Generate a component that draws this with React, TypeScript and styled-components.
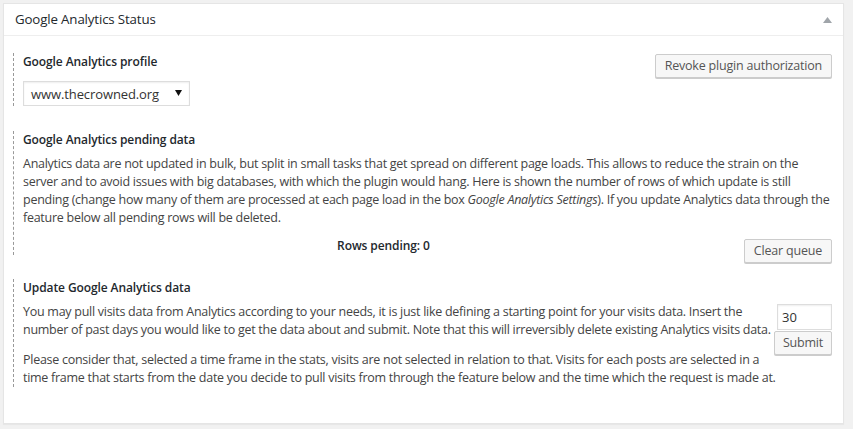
import React from 'react';
import styled, { createGlobalStyle } from 'styled-components';

const GlobalStyle = createGlobalStyle`
  html, body {
    margin: 0;
    padding: 0;
    background: #f1f1f1;
  }
  body {
    font-family: "Open Sans", "Liberation Sans", sans-serif;
    font-size: 12.5px;
    letter-spacing: -0.27px;
    color: #444;
  }
`;

const Page = styled.div`
  width: 853px;
  height: 429px;
  padding: 3px 9px 0 3px;
  box-sizing: border-box;
`;

const Postbox = styled.div`
  width: 841px;
  height: 421px;
  box-sizing: border-box;
  background: #fff;
  border: 1px solid #e5e5e5;
  box-shadow: 0 1px 1px rgba(0, 0, 0, 0.04);
  overflow: hidden;
`;

const Header = styled.div`
  height: 32px;
  box-sizing: border-box;
  padding: 6px 11px 0 11px;
  border-bottom: 1px solid #eee;
  display: flex;
  justify-content: space-between;
  align-items: flex-start;
`;

const Title = styled.h2`
  margin: 0;
  font-size: 13.3px;
  letter-spacing: -0.15px;
  line-height: 19.6px;
  font-weight: 400;
  color: #23282d;
`;

const Toggle = styled.svg`
  margin-top: 7px;
  width: 9px;
  height: 6px;
  fill: #a0a5aa;
`;

const Body = styled.div`
  padding: 17px 11px 12px 9px;
`;

const Section = styled.div<{ $flex?: boolean; $gap?: number }>`
  border-left: 1px dashed #999;
  padding-left: 9px;
  margin-bottom: ${p => p.$gap ?? 25}px;
  line-height: 18px;
  ${p => p.$flex && `
    display: flex;
    justify-content: space-between;
    align-items: flex-start;
  `}
`;

const Heading = styled.h4`
  margin: 0;
  font-size: 12px;
  letter-spacing: -0.1px;
  line-height: 18px;
  font-weight: 600;
  color: #23282d;
`;

const Text = styled.p<{ $gap?: number }>`
  margin: ${p => p.$gap ?? 6}px 0 0 0;
  line-height: 18px;
`;

const Centered = styled.p`
  margin: 10px 0 0 0;
  text-align: center;
  font-weight: 600;
  font-size: 12px;
  letter-spacing: -0.1px;
  color: #23282d;
`;

const SelectBox = styled.div`
  margin-top: 10px;
  width: 167px;
  height: 25px;
  box-sizing: border-box;
  border: 1px solid #ddd;
  box-shadow: inset 0 1px 2px rgba(0, 0, 0, 0.07);
  display: flex;
  align-items: center;
  justify-content: space-between;
  padding: 0 7px 0 7px;
  color: #333;
  font-size: 13px;
  letter-spacing: -0.1px;
`;

const Arrow = styled.svg`
  width: 7px;
  height: 6px;
  fill: #111;
  margin-bottom: 2px;
`;

const Button = styled.button<{ $float?: boolean; $top?: number }>`
  font-family: "Open Sans", "Liberation Sans", sans-serif;
  font-size: 12.5px;
  letter-spacing: -0.2px;
  color: #555;
  background: #f7f7f7;
  border: 1px solid #ccc;
  border-radius: 2px;
  box-shadow: 0 1px 0 #ccc;
  height: 24px;
  line-height: 21px;
  padding: 0 9px 1px;
  cursor: pointer;
  margin-top: ${p => p.$top ?? 0}px;
  ${p => p.$float && 'float: right;'}
`;

const SideForm = styled.div`
  float: right;
  width: 58px;
  margin: 7px 0 0 3px;
  display: flex;
  flex-direction: column;
  align-items: flex-end;
  gap: 1px;
`;

const NumberInput = styled.input`
  width: 55px;
  height: 26px;
  box-sizing: border-box;
  border: 1px solid #ddd;
  box-shadow: inset 0 1px 2px rgba(0, 0, 0, 0.07);
  font-family: "Open Sans", "Liberation Sans", sans-serif;
  font-size: 13px;
  color: #333;
  padding: 0 4px;
  margin: 0;
  outline: none;
`;

const SmallButton = styled(Button)`
  width: 58px;
  padding: 0 0 1px;
  height: 24px;
`;

export default function App() {
  return (
    <Page>
      <GlobalStyle />
      <Postbox>
        <Header>
          <Title>Google Analytics Status</Title>
          <Toggle viewBox="0 0 9 6">
            <polygon points="4.5,0 9,6 0,6" />
          </Toggle>
        </Header>
        <Body>
          <Section $flex>
            <div>
              <Heading>Google Analytics profile</Heading>
              <SelectBox>
                <span>www.thecrowned.org</span>
                <Arrow viewBox="0 0 7 6">
                  <polygon points="0,0 7,0 3.5,6" />
                </Arrow>
              </SelectBox>
            </div>
            <Button $top={1}>Revoke plugin authorization</Button>
          </Section>

          <Section $gap={24}>
            <Heading>Google Analytics pending data</Heading>
            <Text>
              Analytics data are not updated in bulk, but split in small tasks that get spread on different page loads. This allows to reduce the strain on the server and to avoid issues with big databases, with which the plugin would hang. Here is shown the number of rows of which update is still pending (change how many of them are processed at each page load in the box <em>Google Analytics Settings</em>). If you update Analytics data through the feature below all pending rows will be deleted.
            </Text>
            <Button $float $top={12}>Clear queue</Button>
            <Centered>Rows pending: 0</Centered>
          </Section>

          <Section>
            <Heading>Update Google Analytics data</Heading>
            <SideForm>
              <NumberInput type="text" defaultValue="30" />
              <SmallButton>Submit</SmallButton>
            </SideForm>
            <Text>
              You may pull visits data from Analytics according to your needs, it is just like defining a starting point for your visits data. Insert the number of past days you would like to get the data about and submit. Note that this will irreversibly delete existing Analytics visits data.
            </Text>
            <Text $gap={12}>
              Please consider that, selected a time frame in the stats, visits are not selected in relation to that. Visits for each posts are selected in a time frame that starts from the date you decide to pull visits from through the feature below and the time which the request is made at.
            </Text>
          </Section>
        </Body>
      </Postbox>
    </Page>
  );
}
